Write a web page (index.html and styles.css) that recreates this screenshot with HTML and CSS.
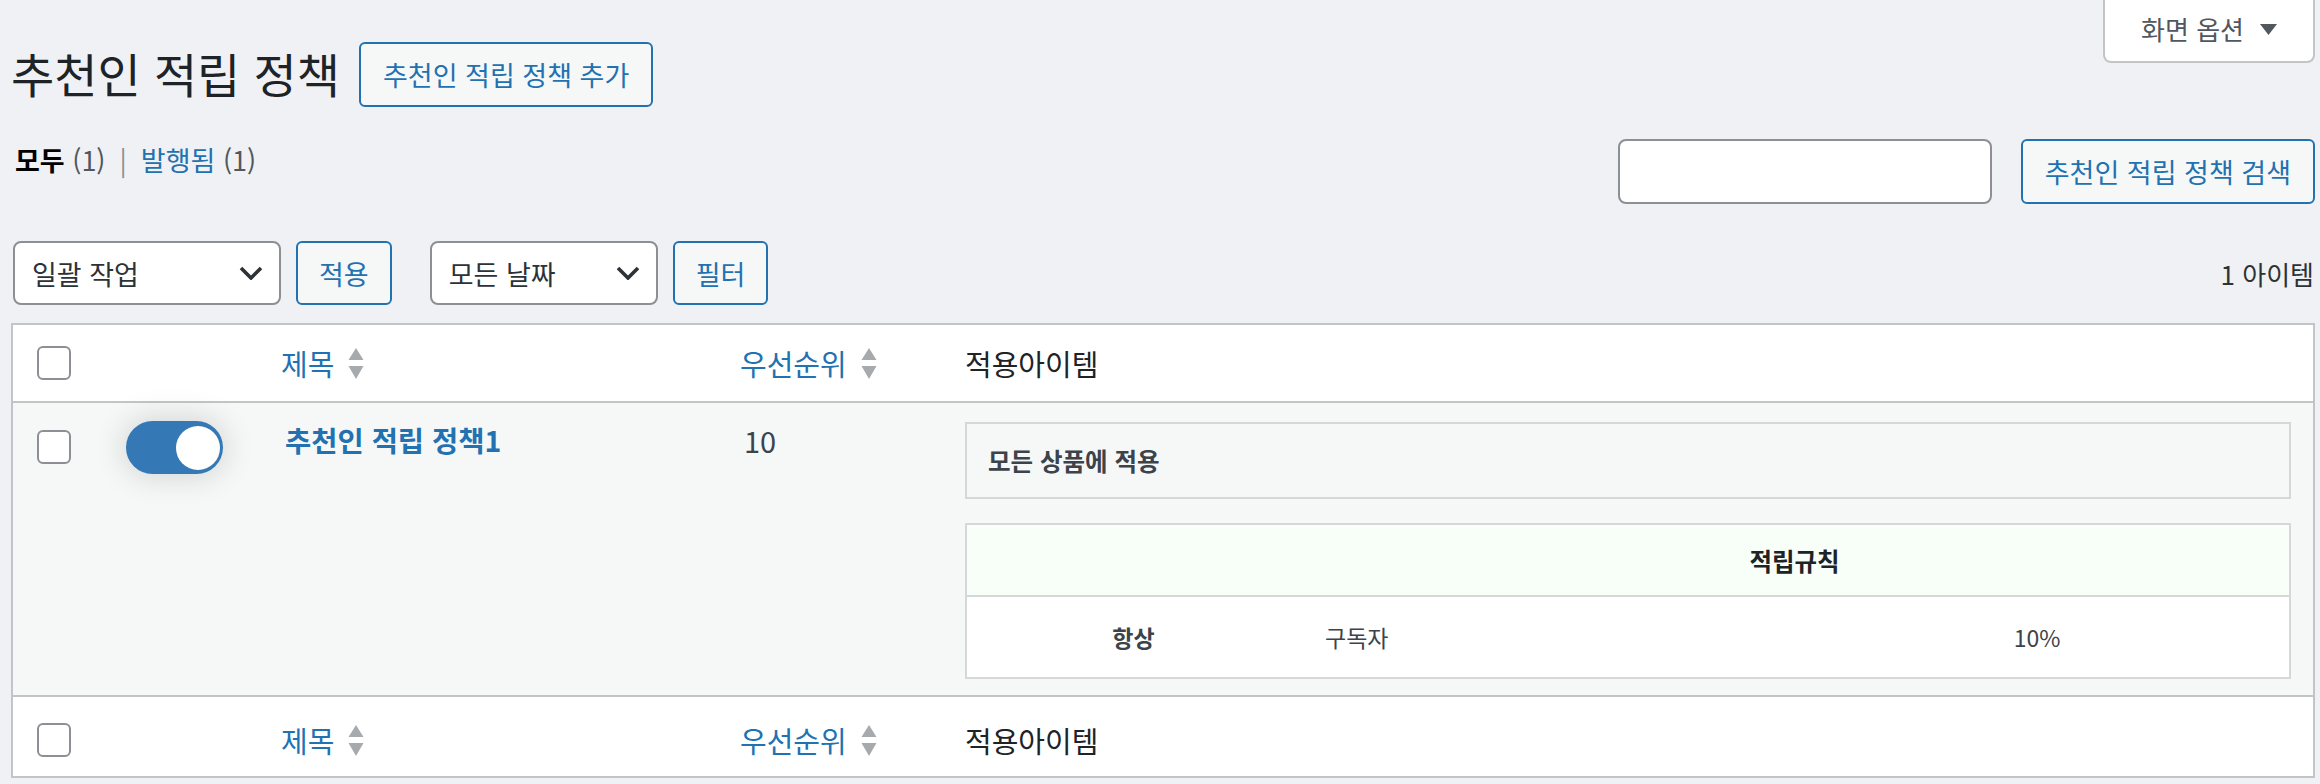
FILE: index.html
```html
<!DOCTYPE html>
<html lang="ko">
<head>
<meta charset="utf-8">
<title>추천인 적립 정책</title>
<link rel="stylesheet" href="styles.css">
</head>
<body>
<div class="wrap">
  <button class="screen-options" type="button"><span>화면 옵션</span><svg class="so-arrow" width="17" height="11" viewBox="0 0 17 11"><polygon points="0,0 17,0 8.5,11" fill="#50575e"/></svg></button>

  <div class="title-row">
    <h1 class="page-title">추천인 적립 정책</h1>
    <a class="btn btn-lg" href="#">추천인 적립 정책 추가</a>
  </div>

  <div class="filter-row">
    <ul class="subsubsub">
      <li><span class="current">모두</span> <span class="count">(1)</span></li>
      <li class="sep">|</li>
      <li><a class="link" href="#">발행됨</a> <span class="count">(1)</span></li>
    </ul>
    <div class="search-box">
      <span class="search-input"></span>
      <button class="btn btn-lg" type="button">추천인 적립 정책 검색</button>
    </div>
  </div>

  <div class="tablenav">
    <div class="actions">
      <div class="action-group">
        <div class="select select-bulk"><span>일괄 작업</span><svg class="chev" width="24" height="14" viewBox="0 0 24 14"><polyline points="2,2 12,12 22,2" fill="none" stroke="#2c3338" stroke-width="3.6"/></svg></div>
        <button class="btn btn-sm" type="button">적용</button>
      </div>
      <div class="action-group">
        <div class="select select-date"><span>모든 날짜</span><svg class="chev" width="24" height="14" viewBox="0 0 24 14"><polyline points="2,2 12,12 22,2" fill="none" stroke="#2c3338" stroke-width="3.6"/></svg></div>
        <button class="btn btn-sm" type="button">필터</button>
      </div>
    </div>
    <div class="displaying-num">1 아이템</div>
  </div>

  <div class="list-table">
    <div class="tr thead">
      <div class="td"><span class="cb"></span></div>
      <div class="td"></div>
      <div class="td"><a class="sort-link" href="#">제목<svg class="sort" width="16" height="31" viewBox="0 0 16 31"><polygon points="8,0 15.5,12 0.5,12" fill="#a7aaad"/><polygon points="0.5,18 15.5,18 8,31" fill="#a7aaad"/></svg></a></div>
      <div class="td"><a class="sort-link" href="#">우선순위<svg class="sort" width="16" height="31" viewBox="0 0 16 31"><polygon points="8,0 15.5,12 0.5,12" fill="#a7aaad"/><polygon points="0.5,18 15.5,18 8,31" fill="#a7aaad"/></svg></a></div>
      <div class="td th-plain">적용아이템</div>
    </div>

    <div class="tr tbody">
      <div class="td"><span class="cb cb-row"></span></div>
      <div class="td"><span class="toggle"><span class="knob"></span></span></div>
      <div class="td"><a class="row-title" href="#">추천인 적립 정책1</a></div>
      <div class="td prio">10</div>
      <div class="td items">
        <div class="apply-box">모든 상품에 적용</div>
        <div class="rule-table">
          <div class="rule-head">
            <div></div>
            <div class="rule-title">적립규칙</div>
          </div>
          <div class="rule-body">
            <div class="rule-when">항상</div>
            <div class="rule-who">구독자</div>
            <div class="rule-rate">10%</div>
          </div>
        </div>
      </div>
    </div>

    <div class="tr tfoot">
      <div class="td"><span class="cb"></span></div>
      <div class="td"></div>
      <div class="td"><a class="sort-link" href="#">제목<svg class="sort" width="16" height="31" viewBox="0 0 16 31"><polygon points="8,0 15.5,12 0.5,12" fill="#a7aaad"/><polygon points="0.5,18 15.5,18 8,31" fill="#a7aaad"/></svg></a></div>
      <div class="td"><a class="sort-link" href="#">우선순위<svg class="sort" width="16" height="31" viewBox="0 0 16 31"><polygon points="8,0 15.5,12 0.5,12" fill="#a7aaad"/><polygon points="0.5,18 15.5,18 8,31" fill="#a7aaad"/></svg></a></div>
      <div class="td th-plain">적용아이템</div>
    </div>
  </div>
</div>
</body>
</html>
```

FILE: styles.css
```css
* { box-sizing: border-box; }

html, body {
  margin: 0;
  padding: 0;
}

body {
  width: 2320px;
  height: 784px;
  overflow: hidden;
  background: #f0f1f4;
  font-family: "Noto Sans CJK KR", "Noto Sans", sans-serif;
  font-size: 27px;
  color: #3c434a;
}

a { text-decoration: none; }

.wrap {
  position: relative;
  padding: 42px 5px 0 11px;
}

/* screen options tab hanging from the top edge */
.screen-options {
  position: absolute;
  top: 0;
  right: 5px;
  width: 212px;
  height: 63px;
  background: #fff;
  border: 2px solid #c3c4c7;
  border-top: none;
  border-radius: 0 0 8px 8px;
  font-family: inherit;
  font-size: 26px;
  color: #50575e;
  display: flex;
  align-items: center;
  justify-content: center;
  gap: 16px;
  padding: 0 0 3px;
  line-height: 1;
}

/* title */
.title-row {
  display: flex;
  align-items: center;
  gap: 19px;
  height: 65px;
}

.page-title {
  margin: 0 0 4px;
  font-size: 47px;
  font-weight: 400;
  line-height: 1;
  color: #1d2327;
}

.btn {
  display: inline-flex;
  align-items: center;
  justify-content: center;
  height: 64px;
  padding: 0 20px;
  border: 2px solid #2271b1;
  border-radius: 6px;
  background: #f6f7f7;
  color: #2271b1;
  font-family: inherit;
  font-size: 27px;
  line-height: 1;
  white-space: nowrap;
}

.btn-lg {
  height: 65px;
  padding: 0 22px;
}

.btn-sm {
  padding: 0 21px;
}

/* views + search */
.filter-row {
  display: flex;
  justify-content: space-between;
  align-items: flex-start;
  margin-top: 32px;
}

.subsubsub {
  display: flex;
  gap: 14px;
  margin: 0 0 0 4px;
  padding: 0;
  list-style: none;
  line-height: 42px;
  font-size: 27px;
}

.subsubsub .current {
  color: #000;
  font-weight: 700;
}

.subsubsub .count { color: #50575e; }
.subsubsub .sep { color: #8c8f94; }
.subsubsub .link { color: #2271b1; }

.search-box {
  display: flex;
  gap: 29px;
}

.search-input {
  display: block;
  width: 374px;
  height: 65px;
  border: 2px solid #8c8f94;
  border-radius: 8px;
  background: #fff;
}

/* tablenav */
.tablenav {
  display: flex;
  justify-content: space-between;
  align-items: center;
  margin-top: 37px;
  height: 64px;
}

.actions {
  display: flex;
  gap: 38px;
  margin-left: 2px;
}

.action-group {
  display: flex;
  gap: 15px;
}

.select {
  display: flex;
  align-items: center;
  justify-content: space-between;
  height: 64px;
  padding: 0 16px 0 17px;
  border: 2px solid #8c8f94;
  border-radius: 8px;
  background: #fff;
  color: #2c3338;
  font-size: 27px;
}

.select-bulk { width: 268px; }
.select-date { width: 228px; }

.displaying-num {
  font-size: 26px;
  color: #2c3338;
  padding-right: 1px;
}

/* list table */
.list-table {
  margin-top: 18px;
  border: 2px solid #c3c4c7;
  background: #fff;
}

.tr {
  display: grid;
  grid-template-columns: 113px 155px 459px 225px 1fr;
}

.thead {
  height: 78px;
  border-bottom: 2px solid #c3c4c7;
  align-items: center;
}

.tfoot {
  height: 79px;
  padding-top: 7px;
  align-items: center;
}

.tbody {
  background: #f6f7f7;
  border-bottom: 2px solid #c3c4c7;
  padding: 18px 22px 16px 0;
  align-items: start;
}

.td {
  display: flex;
  align-items: center;
}

.tbody .td { align-items: flex-start; }

.cb {
  display: block;
  width: 34px;
  height: 34px;
  margin-left: 24px;
  border: 2px solid #8c8f94;
  border-radius: 6px;
  background: #fff;
}

.cb-row { margin-top: 9px; }

.sort-link {
  display: flex;
  align-items: center;
  gap: 14px;
  color: #2271b1;
  font-size: 29px;
  line-height: 38px;
}

.sort { display: block; }

.th-plain {
  color: #1d2327;
  font-size: 29px;
  line-height: 38px;
}

.toggle {
  display: flex;
  align-items: center;
  justify-content: flex-end;
  width: 97px;
  height: 53px;
  padding-right: 3px;
  border-radius: 27px;
  background: #3479b6;
  box-shadow: 0 0 30px 4px rgba(0, 0, 0, 0.13);
}

.knob {
  display: block;
  width: 44px;
  height: 44px;
  border-radius: 50%;
  background: #fff;
}

.row-title {
  padding-left: 4px;
  color: #2271b1;
  font-weight: 700;
  font-size: 28.5px;
  line-height: 38px;
}

.prio {
  padding-left: 4px;
  color: #3c434a;
  font-size: 29px;
  line-height: 38px;
}

.items {
  flex-direction: column;
  align-items: stretch !important;
  gap: 24px;
  margin-top: 1px;
}

.apply-box {
  display: flex;
  align-items: center;
  height: 77px;
  padding: 0 21px;
  border: 2px solid #d5d7d9;
  font-size: 24.5px;
  font-weight: 700;
  color: #3c434a;
}

.rule-table {
  border: 2px solid #d5d7d9;
  background: #fff;
}

.rule-head {
  display: grid;
  grid-template-columns: 333px 1fr;
  align-items: center;
  height: 72px;
  background: #f8fff8;
  border-bottom: 2px solid #d5d7d9;
}

.rule-title {
  text-align: center;
  font-size: 24.5px;
  font-weight: 700;
  color: #1d2327;
}

.rule-body {
  display: grid;
  grid-template-columns: 333px 485px 1fr;
  align-items: center;
  height: 80px;
  font-size: 23px;
  color: #3c434a;
}

.rule-when {
  text-align: center;
  font-weight: 700;
}

.rule-who { padding-left: 25px; }

.rule-rate { text-align: center; }
```
